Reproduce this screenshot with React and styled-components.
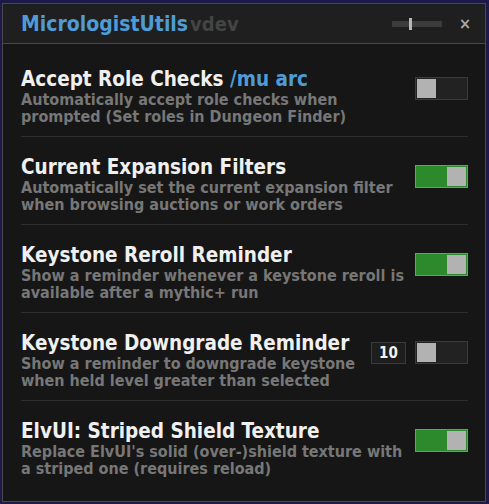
import React from 'react';
import styled, { createGlobalStyle } from 'styled-components';

const GlobalStyle = createGlobalStyle`
  html, body {
    margin: 0;
    padding: 0;
    background: #1d1a4a;
  }
  body {
    padding: 3px 3px 2px 2px;
    font-family: "DejaVu Sans Condensed", "DejaVu Sans", sans-serif;
    font-stretch: condensed;
  }
`;

const Window = styled.div`
  width: 484px;
  height: 499px;
  box-sizing: border-box;
  border: 1px solid #484848;
  background: #161616;
  display: flex;
  flex-direction: column;
`;

const TitleBar = styled.div`
  height: 40px;
  box-sizing: border-box;
  background: #1f1f1f;
  border-bottom: 1px solid #484848;
  display: flex;
  align-items: center;
  padding: 0 14px 0 18px;
`;

const AppName = styled.span`
  font-size: 21px;
  font-weight: bold;
  color: #4f9bd6;
`;

const Version = styled.span`
  font-size: 20px;
  font-weight: bold;
  color: #444444;
  margin-left: 2px;
  flex: 1;
`;

const ScaleSlider = styled.div`
  position: relative;
  width: 50px;
  height: 6px;
  background: #3c3c3c;
  margin-right: 17px;

  &::after {
    content: '';
    position: absolute;
    left: 17px;
    top: -3px;
    width: 3px;
    height: 12px;
    background: #b8b8b8;
  }
`;

const CloseButton = styled.span`
  font-size: 16px;
  font-weight: bold;
  color: #a8a8a8;
  line-height: 1;
`;

const List = styled.div`
  display: flex;
  flex-direction: column;
  padding: 0 17px 0 18px;
`;

const Row = styled.div`
  display: flex;
  align-items: center;
  gap: 10px;
  padding: ${p => (p.$first ? '23px' : '18px')} 0 11px;
  border-bottom: ${p => (p.$last ? 'none' : '1px solid #2e2e2e')};
`;

const Text = styled.div`
  flex: 1;
  display: flex;
  flex-direction: column;
`;

const Title = styled.div`
  font-size: 20.5px;
  font-weight: bold;
  color: #f0f0f0;
  line-height: 24px;
`;

const Command = styled.span`
  color: #4f9bd6;
`;

const Desc = styled.div`
  font-size: 16px;
  font-weight: bold;
  color: #777777;
  line-height: 17px;
`;

const Controls = styled.div`
  display: flex;
  align-items: center;
  gap: 9px;
  margin-bottom: 15px;
`;

const NumberBox = styled.div`
  width: 35px;
  height: 22px;
  box-sizing: border-box;
  border: 1px solid #3a3a3a;
  background: #1e1e1e;
  color: #f2f2f2;
  font-size: 15px;
  font-weight: bold;
  display: flex;
  align-items: center;
  justify-content: center;
`;

const Toggle = styled.div`
  width: 53px;
  height: 23px;
  box-sizing: border-box;
  padding: 1px;
  border: 1px solid ${p => (p.$on ? '#45b845' : '#3a3a3a')};
  background: ${p => (p.$on ? '#2c8a2c' : '#222222')};
  display: flex;
  justify-content: ${p => (p.$on ? 'flex-end' : 'flex-start')};
`;

const Knob = styled.div`
  width: 19px;
  height: 19px;
  background: #b2b2b2;
`;

const options = [
  {
    title: 'Accept Role Checks',
    command: '/mu arc',
    desc: ['Automatically accept role checks when', 'prompted (Set roles in Dungeon Finder)'],
    on: false,
  },
  {
    title: 'Current Expansion Filters',
    desc: ['Automatically set the current expansion filter', 'when browsing auctions or work orders'],
    on: true,
  },
  {
    title: 'Keystone Reroll Reminder',
    desc: ['Show a reminder whenever a keystone reroll is', 'available after a mythic+ run'],
    on: true,
  },
  {
    title: 'Keystone Downgrade Reminder',
    desc: ['Show a reminder to downgrade keystone', 'when held level greater than selected'],
    on: false,
    value: 10,
  },
  {
    title: 'ElvUI: Striped Shield Texture',
    desc: ["Replace ElvUI's solid (over-)shield texture with", 'a striped one (requires reload)'],
    on: true,
  },
];

const App = () => {
  return (
    <>
      <GlobalStyle />
      <Window>
        <TitleBar>
          <AppName>MicrologistUtils</AppName>
          <Version>vdev</Version>
          <ScaleSlider />
          <CloseButton>×</CloseButton>
        </TitleBar>
        <List>
          {options.map((o, i) => (
            <Row key={o.title} $first={i === 0} $last={i === options.length - 1}>
              <Text>
                <Title>
                  {o.title} {o.command && <Command>{o.command}</Command>}
                </Title>
                {o.desc.map(line => (
                  <Desc key={line}>{line}</Desc>
                ))}
              </Text>
              <Controls>
                {o.value != null && <NumberBox>{o.value}</NumberBox>}
                <Toggle $on={o.on}>
                  <Knob />
                </Toggle>
              </Controls>
            </Row>
          ))}
        </List>
      </Window>
    </>
  );
};

export default App;
